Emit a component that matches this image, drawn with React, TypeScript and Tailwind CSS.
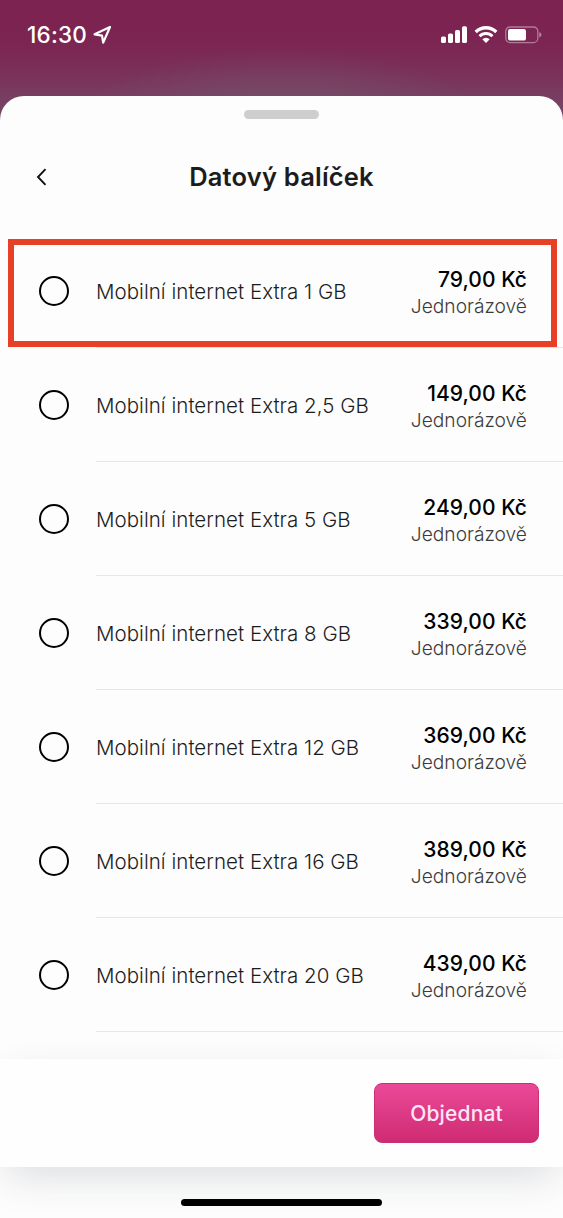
import { useState } from 'react';

interface DataPackage {
    id: string;
    name: string;
    price: string;
}

const packages: DataPackage[] = [
    { id: '1', name: 'Mobilní internet Extra 1 GB', price: '79,00 Kč' },
    { id: '2.5', name: 'Mobilní internet Extra 2,5 GB', price: '149,00 Kč' },
    { id: '5', name: 'Mobilní internet Extra 5 GB', price: '249,00 Kč' },
    { id: '8', name: 'Mobilní internet Extra 8 GB', price: '339,00 Kč' },
    { id: '12', name: 'Mobilní internet Extra 12 GB', price: '369,00 Kč' },
    { id: '16', name: 'Mobilní internet Extra 16 GB', price: '389,00 Kč' },
    { id: '20', name: 'Mobilní internet Extra 20 GB', price: '439,00 Kč' },
];

function StatusBar() {
    return (
        <div className="flex h-[70px] items-center justify-between pl-[27px] pr-[21px] text-white">
            <div className="flex items-center">
                <span className="text-[22.5px] font-medium leading-none tracking-[0.2px]">16:30</span>
                <svg className="ml-[5px] h-[20px] w-[20px]" viewBox="0 0 20 20" fill="none">
                    <path
                        d="M18 2 L2.6 9.3 L10 10.6 L11.2 17.6 Z"
                        stroke="currentColor"
                        strokeWidth="2.2"
                        strokeLinejoin="round"
                    />
                </svg>
            </div>
            <div className="flex items-center">
                <svg className="h-[18px] w-[27px]" viewBox="0 0 27 18" fill="currentColor">
                    <rect x="0" y="10.5" width="5" height="6.5" rx="1.6" />
                    <rect x="7" y="7.5" width="5" height="9.5" rx="1.6" />
                    <rect x="14" y="4" width="5" height="13" rx="1.6" />
                    <rect x="21" y="0.2" width="5" height="16.8" rx="1.6" />
                </svg>
                <svg className="ml-[6px] h-[18px] w-[24px]" viewBox="0 0 24 18" fill="none" stroke="currentColor">
                    <path d="M1.7 6 A14.6 14.6 0 0 1 22.3 6" strokeWidth="3.3" />
                    <path d="M5.6 10.2 A9 9 0 0 1 18.4 10.2" strokeWidth="3" />
                    <path d="M12 17 L8.3 13.3 A5.2 5.2 0 0 1 15.7 13.3 Z" fill="currentColor" stroke="none" />
                </svg>
                <svg className="ml-[7px] h-[18px] w-[37px]" viewBox="0 0 37 18" fill="none">
                    <rect x="0.8" y="1" width="32" height="15.6" rx="4.2" stroke="white" strokeOpacity="0.4" strokeWidth="1.3" />
                    <rect x="3" y="3" width="18" height="11.6" rx="2.2" fill="white" />
                    <path d="M34.3 6 Q36.5 7 36.5 8.8 Q36.5 10.6 34.3 11.6 Z" fill="white" fillOpacity="0.45" />
                </svg>
            </div>
        </div>
    );
}

interface PackageRowProps {
    item: DataPackage;
    selected: boolean;
    highlighted: boolean;
    onSelect: (id: string) => void;
}

function PackageRow({ item, selected, highlighted, onSelect }: PackageRowProps) {
    return (
        <button onClick={() => onSelect(item.id)} className="relative flex h-[114px] w-full text-left">
            <span className="flex w-24 shrink-0 items-center pl-[39px]">
                <span className="flex h-[30px] w-[30px] items-center justify-center rounded-full border-2 border-black">
                    {selected && <span className="h-4 w-4 rounded-full bg-pink-600" />}
                </span>
            </span>
            <span className="flex flex-1 items-center justify-between border-b border-[#e6e6e6] pr-9 pt-[2px]">
                <span className="whitespace-nowrap text-[20.5px] font-light leading-6 tracking-[0.04px] text-[#1c1c1c]">
                    {item.name}
                </span>
                <span className="flex flex-col items-end whitespace-nowrap pt-[2px]">
                    <span className="text-[21px] font-medium leading-[27px] tracking-[0.05px] text-black">{item.price}</span>
                    <span className="text-[19.2px] font-light leading-[27px] text-[#3c3c3c]">Jednorázově</span>
                </span>
            </span>
            {highlighted && (
                <span className="absolute left-[8px] right-[6px] top-[5px] h-[108px] border-[6px] border-[#e84027]" />
            )}
        </button>
    );
}

export default function App() {
    const [selectedId, setSelectedId] = useState('');

    return (
        <div className="flex h-[1218px] w-[563px] flex-col overflow-hidden bg-[#7d2250] bg-[radial-gradient(ellipse_190px_60px_at_50%_108px,#75546cbb_0%,#75546c00_100%),linear-gradient(to_bottom,#7d2250_0px,#7c2552_42px,#7a2f58_70px,#783d60_96px,#77486a_122px)] bg-[length:563px_130px] bg-no-repeat font-['Inter','Liberation_Sans',sans-serif]">
            <div className="h-24 shrink-0">
                <StatusBar />
            </div>
            <div className="flex flex-1 flex-col rounded-t-[24px] bg-[#fdfdfd]">
                <div className="mx-auto mt-[14px] h-[9px] w-[75px] shrink-0 rounded-full bg-[#cecece]" />
                <div className="grid h-[115px] shrink-0 grid-cols-[96px_1fr_96px] items-center pt-[1px]">
                    <button aria-label="Zpět" className="pl-9">
                        <svg className="h-[18px] w-[12px]" viewBox="0 0 12 18" fill="none">
                            <path d="M9.5 1.2 L2 9 L9.5 16.8" stroke="#111" strokeWidth="1.9" />
                        </svg>
                    </button>
                    <h1 className="text-center text-[25.5px] font-semibold leading-8 tracking-[0.2px] text-[#1c1c1c]">
                        Datový balíček
                    </h1>
                </div>
                <div className="flex h-[825px] shrink-0 flex-col">
                    {packages.map((item, index) => (
                        <PackageRow
                            key={item.id}
                            item={item}
                            selected={selectedId === item.id}
                            highlighted={index === 0}
                            onSelect={setSelectedId}
                        />
                    ))}
                </div>
                <div className="flex h-[108px] shrink-0 items-center justify-end bg-[#fefefe] pr-6 shadow-[0_14px_42px_-6px_rgba(40,45,65,0.16)]">
                    <button className="h-[60px] w-[165px] rounded-[8px] border border-[#cb2f75] bg-linear-to-b from-[#ec4899] to-[#cf2b73] pt-[1px] text-[21px] font-medium tracking-[0.15px] text-[#ffe6f5]">
                        Objednat
                    </button>
                </div>
                <div className="relative mx-auto mt-[32px] h-[7px] w-[201px] shrink-0 rounded-full bg-black" />
            </div>
        </div>
    );
}
